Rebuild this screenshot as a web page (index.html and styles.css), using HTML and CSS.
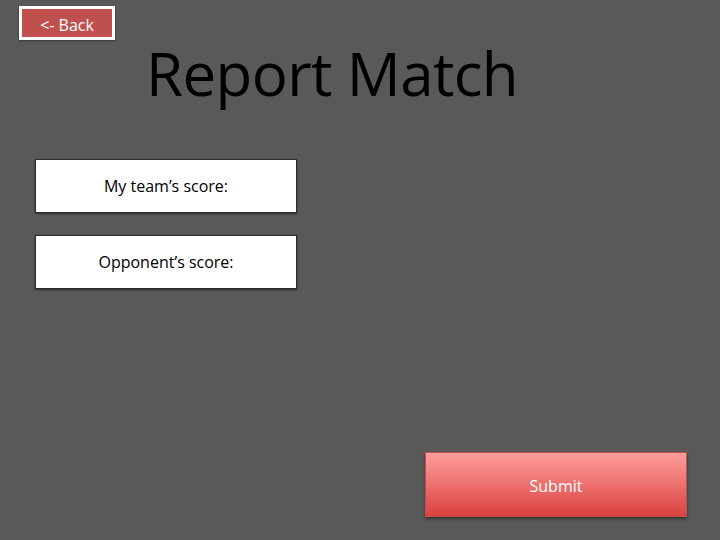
FILE: index.html
```html
<!DOCTYPE html>
<html>
<head>
<meta charset="utf-8">
<link rel="stylesheet" href="styles.css">
</head>
<body>
<div class="page">
  <div class="top">
    <button class="back">&lt;- Back</button>
  </div>
  <h1 class="title">Report Match</h1>
  <div class="fields">
    <div class="field">My team’s score:</div>
    <div class="field">Opponent’s score:</div>
  </div>
  <div class="bottom">
    <button class="submit">Submit</button>
  </div>
</div>
</body>
</html>
```
FILE: styles.css
```css
html, body {
  margin: 0;
  padding: 0;
  background: #595959;
}
.page {
  width: 720px;
  height: 540px;
  display: flex;
  flex-direction: column;
  font-family: "Open Sans", "Noto Sans", sans-serif;
  box-sizing: border-box;
}
.top {
  padding: 6px 0 0 19px;
  height: 34px;
}
.back {
  width: 96px;
  height: 34px;
  box-sizing: border-box;
  border: 3px solid #ffffff;
  background: #c0504d;
  color: #ffffff;
  font-family: inherit;
  font-size: 16px;
  padding: 3px 0 0 0;
  box-shadow: 0 1px 2px rgba(0,0,0,0.4);
}
.title {
  margin: 0;
  padding-left: 146px;
  font-weight: normal;
  font-size: 60px;
  line-height: 66px;
  color: #000;
  letter-spacing: -0.6px;
}
.fields {
  display: flex;
  flex-direction: column;
  gap: 22px;
  padding: 53px 0 0 35px;
}
.field {
  width: 262px;
  height: 54px;
  box-sizing: border-box;
  background: #ffffff;
  border: 1px solid #2a2a2a;
  box-shadow: 0 1px 2px rgba(0,0,0,0.5);
  display: flex;
  align-items: center;
  justify-content: center;
  font-size: 16px;
  color: #000;
}
.bottom {
  margin-top: auto;
  display: flex;
  justify-content: flex-end;
  padding: 0 33px 23px 0;
}
.submit {
  width: 262px;
  height: 65px;
  box-sizing: border-box;
  border: 1px solid #c0504d;
  background: linear-gradient(to bottom, #ff9d9b 0%, #f07a78 40%, #d9413e 100%);
  color: #ffffff;
  font-family: inherit;
  font-size: 16px;
  padding: 2px 0 0 0;
  box-shadow: 0 2px 3px rgba(0,0,0,0.4);
}
```
